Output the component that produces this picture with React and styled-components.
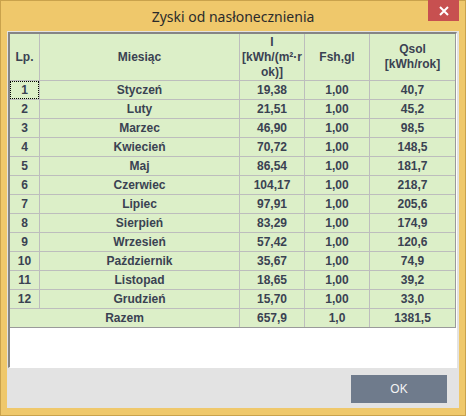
import React from "react";
import styled, { createGlobalStyle } from "styled-components";

const Global = createGlobalStyle`
  html, body { margin: 0; padding: 0; background: #ffffff; }
  body { font-family: "Liberation Sans", Arial, sans-serif; }
`;

const Window = styled.div`
  position: relative;
  box-sizing: border-box;
  width: 466px;
  height: 416px;
  background: #efc86b;
  border: 1px solid #c9a24c;
  display: flex;
  flex-direction: column;
  padding: 0 6px 7px 6px;
`;

const TitleBar = styled.div`
  height: 29px;
  flex: none;
  display: flex;
  align-items: center;
  justify-content: center;
  font-family: "Noto Sans", "Open Sans", sans-serif;
  font-size: 14px;
  color: #2b2b2b;
  padding-top: 1px;
`;

const CloseButton = styled.div`
  position: absolute;
  top: -1px;
  right: 6px;
  width: 31px;
  height: 21px;
  background: #c75050;
  display: flex;
  align-items: center;
  justify-content: center;
`;

const Client = styled.div`
  flex: 1;
  display: flex;
  flex-direction: column;
  background: #e3e3e3;
  padding: 1px 2px 0 1px;
`;

const Pane = styled.div`
  box-sizing: border-box;
  height: 336px;
  flex: none;
  background: #ffffff;
  border-top: 2px solid #858585;
  border-left: 2px solid #858585;
  border-right: 1px solid #ffffff;
  border-bottom: 1px solid #ffffff;
  overflow: hidden;
`;

const Grid = styled.div`
  display: grid;
  grid-template-columns: 29px 199px 64px 64px 85px;
  grid-auto-rows: 18px;
  grid-template-rows: 46px;
  gap: 1px;
  background: #bdbdbd;
  width: max-content;
  border-right: 1px solid #9a9a9a;
  border-bottom: 1px solid #9a9a9a;
  font-family: "Liberation Sans", Arial, sans-serif;
  font-weight: bold;
  font-size: 12px;
  color: #3a4252;
`;

const Cell = styled.div`
  background: #dcefc8;
  display: flex;
  align-items: center;
  justify-content: center;
  grid-column: ${(p) => (p.$span ? `span ${p.$span}` : "auto")};
  outline: ${(p) => (p.$focus ? "1px dotted #000" : "none")};
  outline-offset: -1px;
  white-space: nowrap;
  line-height: 15px;
`;

const HeadCell = styled(Cell)`
  text-align: center;
  flex-direction: column;
`;

const Footer = styled.div`
  flex: 1;
  display: flex;
  justify-content: flex-end;
  align-items: flex-start;
  padding: 7px 10px 0 0;
`;

const OkButton = styled.button`
  width: 96px;
  height: 28px;
  border: none;
  background: #6f7b8c;
  color: #f4f4f4;
  font-family: "Liberation Sans", Arial, sans-serif;
  font-size: 12px;
  padding: 0;
`;

const rows = [
  ["1", "Styczeń", "19,38", "1,00", "40,7"],
  ["2", "Luty", "21,51", "1,00", "45,2"],
  ["3", "Marzec", "46,90", "1,00", "98,5"],
  ["4", "Kwiecień", "70,72", "1,00", "148,5"],
  ["5", "Maj", "86,54", "1,00", "181,7"],
  ["6", "Czerwiec", "104,17", "1,00", "218,7"],
  ["7", "Lipiec", "97,91", "1,00", "205,6"],
  ["8", "Sierpień", "83,29", "1,00", "174,9"],
  ["9", "Wrzesień", "57,42", "1,00", "120,6"],
  ["10", "Październik", "35,67", "1,00", "74,9"],
  ["11", "Listopad", "18,65", "1,00", "39,2"],
  ["12", "Grudzień", "15,70", "1,00", "33,0"],
];

export default function App() {
  return (
    <>
      <Global />
      <Window>
        <TitleBar>Zyski od nasłonecznienia</TitleBar>
        <CloseButton>
          <svg width="10" height="10" viewBox="0 0 10 10">
            <path d="M1 1 L9 9 M9 1 L1 9" stroke="#ffffff" strokeWidth="2" />
          </svg>
        </CloseButton>
        <Client>
          <Pane>
            <Grid>
              <HeadCell>Lp.</HeadCell>
              <HeadCell>Miesiąc</HeadCell>
              <HeadCell>
                <span>I</span>
                <span>[kWh/(m²·r</span>
                <span>ok)]</span>
              </HeadCell>
              <HeadCell>Fsh,gl</HeadCell>
              <HeadCell>
                <span>Qsol</span>
                <span>[kWh/rok]</span>
              </HeadCell>
              {rows.map((r, i) => (
                <React.Fragment key={r[0]}>
                  <Cell $focus={i === 0}>{r[0]}</Cell>
                  <Cell>{r[1]}</Cell>
                  <Cell>{r[2]}</Cell>
                  <Cell>{r[3]}</Cell>
                  <Cell>{r[4]}</Cell>
                </React.Fragment>
              ))}
              <Cell $span={2}>Razem</Cell>
              <Cell>657,9</Cell>
              <Cell>1,0</Cell>
              <Cell>1381,5</Cell>
            </Grid>
          </Pane>
          <Footer>
            <OkButton>OK</OkButton>
          </Footer>
        </Client>
      </Window>
    </>
  );
}
